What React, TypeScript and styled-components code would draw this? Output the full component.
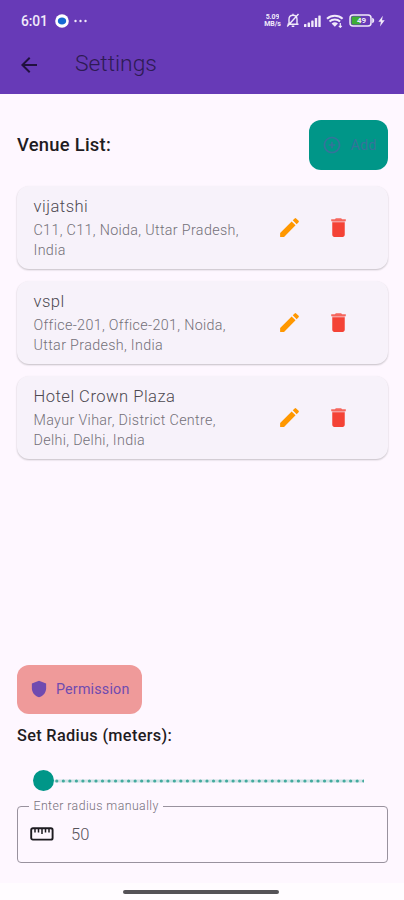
import React from 'react';
import styled, { createGlobalStyle } from 'styled-components';

const Global = createGlobalStyle`
  *, *::before, *::after { box-sizing: border-box; }
  body { margin: 0; background: #fef7ff; font-family: Roboto, "Liberation Sans", sans-serif; }
  h1, h2, p { margin: 0; font-weight: 400; }
  button { border: 0; margin: 0; padding: 0; background: none; font: inherit; }
  svg { display: block; flex: none; }
`;

const Screen = styled.div`
  width: 404px;
  height: 900px;
  display: flex;
  flex-direction: column;
  background: #fef7ff;
  overflow: hidden;
`;

const Header = styled.header`
  height: 93.5px;
  flex: none;
  background: #673ab7;
`;

const StatusBar = styled.div`
  height: 41px;
  padding: 0 19px 0 21px;
  display: flex;
  align-items: center;
  color: #f1eafa;
`;

const Clock = styled.span`
  font-size: 13.8px;
  font-weight: 500;
  width: 34px;
  letter-spacing: -0.1px;
`;

const StatusIcons = styled.div`
  margin-left: auto;
  display: flex;
  align-items: center;
`;

const NetSpeed = styled.div`
  width: 17px;
  margin-right: 5px;
  display: flex;
  flex-direction: column;
  align-items: center;
  font-size: 7px;
  line-height: 7px;
  font-weight: 700;
  letter-spacing: -0.1px;
  white-space: nowrap;
`;

const SpeedLine = styled.span`
  height: 7px;
  overflow: hidden;
`;

const Gap = styled.i<{ $w: number }>`
  width: ${(p) => p.$w}px;
`;

const AppBar = styled.div`
  height: 47px;
  padding-left: 17px;
  display: flex;
  align-items: center;
  color: #21113f;
`;

const IconButton = styled.button`
  width: 24px;
  height: 24px;
  display: grid;
  place-items: center;
  color: inherit;
`;

const Title = styled.h1`
  margin: -1px 0 0 34px;
  font-size: 22.8px;
  font-weight: 350;
  line-height: 28px;
  color: #2e1a54;
  letter-spacing: 0;
`;

const Main = styled.main`
  flex: 1;
  padding: 26.5px 16px 0 17px;
  display: flex;
  flex-direction: column;
`;

const ListHeader = styled.div`
  height: 50px;
  display: flex;
  align-items: center;
  justify-content: space-between;
`;

const Heading = styled.h2<{ $size: number; $spacing: number }>`
  font-size: ${(p) => p.$size}px;
  letter-spacing: ${(p) => p.$spacing}px;
  font-weight: 500;
  line-height: 20px;
  color: #1f1c22;
`;

const ActionButton = styled.button<{ $bg: string; $fg: string; $w: number; $gap: number }>`
  width: ${(p) => p.$w}px;
  height: 49.5px;
  flex: none;
  padding-left: 13px;
  display: flex;
  align-items: center;
  gap: ${(p) => p.$gap}px;
  border-radius: 12px;
  background: ${(p) => p.$bg};
  color: ${(p) => p.$fg};
  font-size: 14.3px;
  letter-spacing: 0.18px;
`;

const List = styled.div`
  margin-top: 16px;
  display: flex;
  flex-direction: column;
  gap: 12px;
`;

const Card = styled.article`
  height: 83px;
  padding: 9px 0 0 16.5px;
  display: flex;
  border-radius: 12px;
  background: #f7f2fa;
  box-shadow: 0 1px 2px rgba(0, 0, 0, 0.2), 0 1px 2px rgba(0, 0, 0, 0.04);
`;

const CardText = styled.div`
  width: 243px;
  white-space: nowrap;
`;

const VenueName = styled.p`
  font-size: 16.6px;
  font-weight: 350;
  line-height: 23px;
  letter-spacing: 0.48px;
  color: #4d4951;
`;

const Address = styled.p`
  margin-top: 1.5px;
  font-size: 14.3px;
  font-weight: 350;
  line-height: 20.6px;
  letter-spacing: 0.34px;
  color: #737078;
`;

const CardActions = styled.div`
  height: 64px;
  display: flex;
  align-items: center;
  gap: 25.5px;
`;

const Bottom = styled.section`
  margin-top: auto;
  display: flex;
  flex-direction: column;
`;

const RadiusTitle = styled.div`
  margin-top: 12px;
`;

const Slider = styled.div`
  height: 21px;
  margin: 24px 24px 0 16px;
  display: flex;
  align-items: center;
`;

const Thumb = styled.div`
  width: 21px;
  height: 21px;
  flex: none;
  border-radius: 50%;
  background: #009688;
`;

const Field = styled.div`
  position: relative;
  height: 57.5px;
  margin: 14.5px 0 19.5px;
  padding-left: 12px;
  display: flex;
  align-items: center;
  border: 1px solid #99929e;
  border-radius: 4px;
  color: #1d1b20;
`;

const FieldLabel = styled.label`
  position: absolute;
  left: 11px;
  top: -9px;
  padding: 0 4px 0 4.5px;
  background: #fef7ff;
  font-size: 12.3px;
  font-weight: 350;
  line-height: 17px;
  letter-spacing: 0.43px;
  color: #756f7a;
  white-space: nowrap;
`;

const FieldValue = styled.span`
  margin-left: 17px;
  font-size: 16.5px;
  font-weight: 350;
  letter-spacing: 0.2px;
  color: #56525a;
`;

const NavBar = styled.div`
  height: 17.5px;
  flex: none;
  display: flex;
  justify-content: center;
  padding: 7.5px 3px 0 0;
  background: #fffcff;
`;

const NavHandle = styled.div`
  width: 156px;
  height: 4px;
  border-radius: 2px;
  background: #555257;
`;

const ChatBadge = () => (
  <svg width="14" height="14" viewBox="0 0 14 14">
    <circle cx="7" cy="7" r="6.8" fill="#fff" />
    <path d="M7 3.5c2.5 0 4.2 1.4 4.2 3.4S9.500 10.400 7 10.400 2.800 9 2.800 6.900 4.500 3.500 7 3.500z" fill="#1769d2" />
  </svg>
);

const Dots = () => (
  <svg width="13" height="4" viewBox="0 0 13 4" fill="currentColor">
    <circle cx="1.5" cy="2" r="1.2" />
    <circle cx="6.500" cy="2" r="1.2" />
    <circle cx="11.500" cy="2" r="1.2" />
  </svg>
);

const BellOff = () => (
  <svg width="14" height="15" viewBox="0 0 14 15" fill="none" stroke="currentColor" strokeWidth="1.4">
    <path d="M3 11V6.300C3 3.800 4.700 2.300 7 2.300s4 1.500 4 4V11M1.500 11.200h11M7 .8v1.500M5.700 13.300h2.600M12.500 1L1.200 13.500" />
  </svg>
);

const Signal = () => (
  <svg width="17" height="12" viewBox="0 0 17 12" fill="currentColor">
    <rect x="0" y="9" width="2.400" height="3" rx=".6" />
    <rect x="3.600" y="7.500" width="2.400" height="4.500" rx=".6" />
    <rect x="7.200" y="5.500" width="2.400" height="6.500" rx=".6" />
    <rect x="10.800" y="3" width="2.400" height="9" rx=".6" />
    <rect x="14.300" y=".5" width="2.400" height="11.500" rx=".6" />
  </svg>
);

const Wifi = () => (
  <svg width="18" height="14" viewBox="0 0 18 14" fill="none" stroke="currentColor" strokeWidth="2">
    <path d="M1 4.800a11.500 11.500 0 0 1 15.600 0M3.500 7.600a7.800 7.800 0 0 1 10.600 0" />
    <path d="M5.600 9.500a5 5 0 0 1 6.400 0l-3.200 3.300z" fill="currentColor" stroke="none" />
    <path d="M14.300 9v4M12.800 11.800l1.500 1.500 1.500-1.500" strokeWidth="1.200" />
  </svg>
);

const Battery = () => (
  <svg width="26" height="13" viewBox="0 0 26 13">
    <rect x="1" y="1" width="21" height="11" rx="3" fill="none" stroke="currentColor" strokeWidth="1.500" />
    <rect x="2.600" y="2.600" width="9" height="7.800" rx="1" fill="#3fae35" />
    <path d="M23.200 3.800c1.600.6 2 1.500 2 2.700s-.4 2.100-2 2.700z" fill="currentColor" />
    <text x="12.500" y="9.400" textAnchor="middle" fontSize="8" fontWeight="700" fill="currentColor">49</text>
  </svg>
);

const Bolt = () => (
  <svg width="7" height="12" viewBox="0 0 7 12" fill="currentColor">
    <path d="M4.800.8L.4 6.800h2.500L2 11.400l4.700-6.200H4z" />
  </svg>
);

const BackArrow = () => (
  <svg width="24" height="24" viewBox="0 0 24 24" fill="currentColor">
    <path d="M20 11H7.830l5.590-5.590L12 4l-8 8 8 8 1.410-1.410L7.830 13H20v-2z" />
  </svg>
);

const AddCircle = () => (
  <svg width="20" height="20" viewBox="0 0 24 24" fill="currentColor">
    <path d="M13 8h-2v3H8v2h3v3h2v-3h3v-2h-3V8zm-1-6C6.480 2 2 6.480 2 12s4.480 10 10 10 10-4.480 10-10S17.520 2 12 2zm0 18c-4.410 0-8-3.590-8-8s3.590-8 8-8 8 3.590 8 8-3.590 8-8 8z" />
  </svg>
);

const Pencil = () => (
  <svg width="25" height="25" viewBox="0 0 24 24" fill="#ff9800">
    <path d="M3 17.250V21h3.750L17.810 9.940l-3.750-3.750L3 17.250zM20.710 7.040a1 1 0 0 0 0-1.410l-2.340-2.340a1 1 0 0 0-1.410 0l-1.830 1.830 3.750 3.750 1.830-1.830z" />
  </svg>
);

const Trash = () => (
  <svg width="25" height="25" viewBox="0 0 24 24" fill="#f44336">
    <path d="M6 19c0 1.100.9 2 2 2h8c1.100 0 2-.9 2-2V7H6v12z" />
    <path d="M19 4h-3.500l-1-1h-5l-1 1H5v2h14V4z" opacity=".8" />
    <path d="M6 6h12v1H6z" opacity=".45" />
  </svg>
);

const Shield = () => (
  <svg width="18" height="18" viewBox="0 0 24 24" fill="currentColor">
    <path d="M12 1L2.500 4.600V11c0 5.600 4 10.700 9.500 12 5.500-1.300 9.500-6.400 9.500-12V4.600z" />
  </svg>
);

const Ruler = () => (
  <svg width="24" height="14" viewBox="0 0 24 14" fill="none" stroke="currentColor" strokeWidth="1.900">
    <rect x="1.200" y="1.200" width="21.400" height="11.400" rx="1.700" />
    <path d="M5 2v3.600M8.500 2v3.600M12 2v5M15.500 2v3.600M19 2v3.600" strokeWidth="1.500" />
  </svg>
);

const ticks = Array.from({ length: 48 }, (_, i) => 2.800 + i * 6.530);

const Track = () => (
  <svg width="310" height="4" viewBox="0 0 310 4">
    <rect width="309.500" height="3" y=".5" rx="1.500" fill="#d3e4e8" />
    {ticks.map((x) => (
      <circle key={x} cx={x} cy="2" r="1.600" fill="#43aa9e" />
    ))}
  </svg>
);

const venues = [
  { name: 'vijatshi', lines: ['C11, C11, Noida, Uttar Pradesh,', 'India'] },
  { name: 'vspl', lines: ['Office-201, Office-201, Noida,', 'Uttar Pradesh, India'] },
  { name: 'Hotel Crown Plaza', lines: ['Mayur Vihar, District Centre,', 'Delhi, Delhi, India'] },
];

export default function App() {
  return (
    <Screen>
      <Global />
      <Header>
        <StatusBar>
          <Clock>6:01</Clock>
          <ChatBadge />
          <Gap $w={5} />
          <Dots />
          <StatusIcons>
            <NetSpeed>
              <SpeedLine>5.09</SpeedLine>
              <SpeedLine>MB/s</SpeedLine>
            </NetSpeed>
            <BellOff />
            <Gap $w={4} />
            <Signal />
            <Gap $w={5} />
            <Wifi />
            <Gap $w={5} />
            <Battery />
            <Gap $w={3} />
            <Bolt />
          </StatusIcons>
        </StatusBar>
        <AppBar>
          <IconButton aria-label="Back"><BackArrow /></IconButton>
          <Title>Settings</Title>
        </AppBar>
      </Header>
      <Main>
        <ListHeader>
          <Heading $size={18.4} $spacing={0.25}>Venue List:</Heading>
          <ActionButton $w={79.5} $gap={9} $bg="#009688" $fg="#35739b">
            <AddCircle />
            Add
          </ActionButton>
        </ListHeader>
        <List>
          {venues.map((v) => (
            <Card key={v.name}>
              <CardText>
                <VenueName>{v.name}</VenueName>
                <Address>{v.lines[0]}<br />{v.lines[1]}</Address>
              </CardText>
              <CardActions>
                <IconButton aria-label="Edit"><Pencil /></IconButton>
                <IconButton aria-label="Delete"><Trash /></IconButton>
              </CardActions>
            </Card>
          ))}
        </List>
        <Bottom>
          <ActionButton $w={124.5} $gap={8} $bg="#ef9a9a" $fg="#704bb0">
            <Shield />
            Permission
          </ActionButton>
          <RadiusTitle>
            <Heading $size={16.3} $spacing={0.32}>Set Radius (meters):</Heading>
          </RadiusTitle>
          <Slider>
            <Thumb />
            <Track />
          </Slider>
          <Field>
            <FieldLabel>Enter radius manually</FieldLabel>
            <Ruler />
            <FieldValue>50</FieldValue>
          </Field>
        </Bottom>
      </Main>
      <NavBar><NavHandle /></NavBar>
    </Screen>
  );
}
